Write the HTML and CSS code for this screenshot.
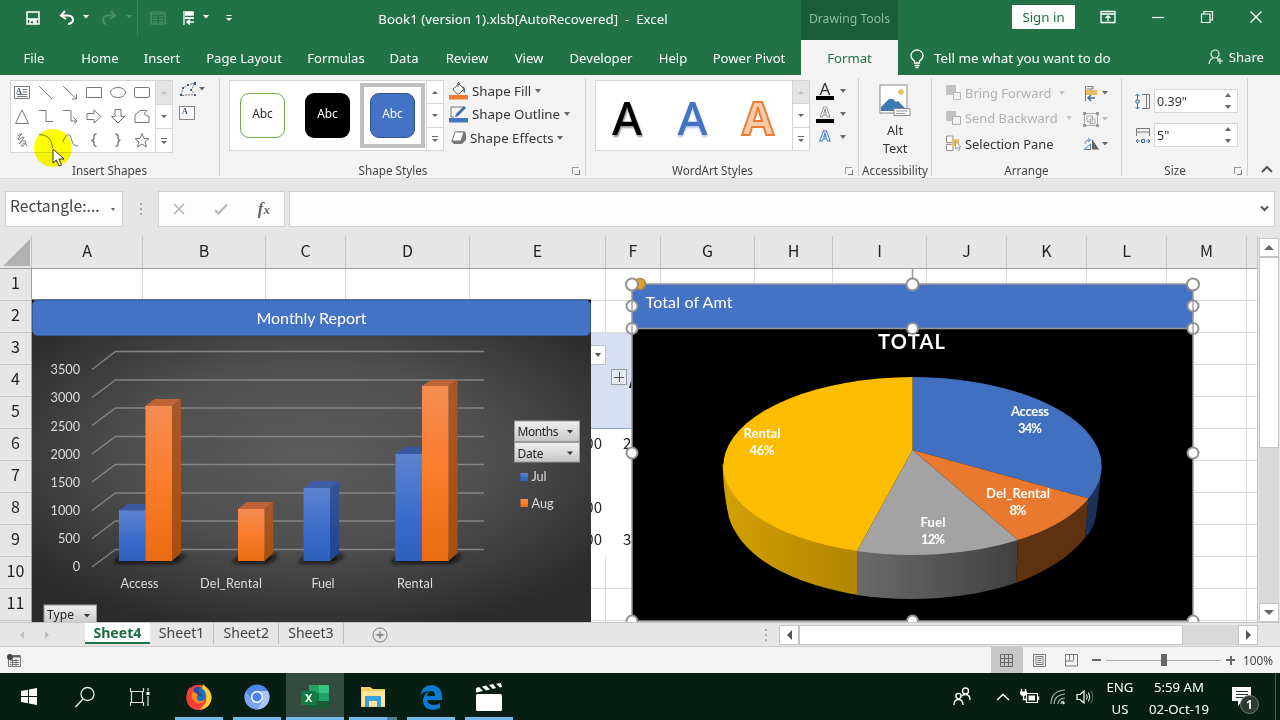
FILE: index.html
```html
<!DOCTYPE html>
<html lang="en">
    <head>
        <meta charset="utf-8">
        <title>Book1 (version 1).xlsb[AutoRecovered] - Excel</title>
        <link rel="stylesheet" href="styles.css">
    </head>
    <body>
        <div id="titlebar">
            <div class="quick">
                <svg class="q-save" width="14" height="14" viewBox="0 0 14 14"><path d="M1 1H13V13H1ZM1 8H13M4 13V9.5H10V13" fill="none" stroke="#fff" stroke-width="1.5"/><rect x="7" y="10" width="2" height="3" fill="#fff"/></svg>
                <svg class="q-undo" width="32" height="16" viewBox="0 0 32 16"><path d="M6 1L2 5.5L7 9M2.5 5.5H9Q14 6 14 10Q13.5 13.5 9 14" fill="none" stroke="#fff" stroke-width="2"/><path d="M24 5h6l-3 3.5z" fill="#fff"/></svg>
                <svg class="q-redo" width="32" height="16" viewBox="0 0 32 16"><path d="M10 1L14 5.5L9 9M13.5 5.5H7Q2 6 2 10Q2.5 13.5 5 14" fill="none" stroke="#4d8d68" stroke-width="2"/><path d="M25 5h6l-3 3.5z" fill="#4d8d68"/></svg>
                <i class="q-line"></i>
                <svg class="q-form" width="16" height="14" viewBox="0 0 16 14"><path d="M1 1H15V13H1ZM1 3H15M3 6H7M3 8.5H7M3 11H7M9 6H13M9 8.5H13M9 11H13" fill="none" stroke="#56936e" stroke-width="1.2"/></svg>
                <svg class="q-list" width="30" height="16" viewBox="0 0 30 16"><path d="M2 1V15M3 2H11V5H3M3 8H12" fill="none" stroke="#fff" stroke-width="1.3"/><path d="M3 2h9v3H3zM3 7h8v2H3z" fill="#fff"/><path d="M12 12H5M8 9.5L5 12L8 14.5" fill="none" stroke="#fff" stroke-width="1.6"/><path d="M21 5h6l-3 3.5z" fill="#fff"/></svg>
                <svg class="q-more" width="8" height="8" viewBox="0 0 8 8"><path d="M1.5 1.5h5" stroke="#fff"/><path d="M1 4h6l-3 3z" fill="#fff"/></svg>
            </div>
            <div class="title">Book1 (version 1).xlsb[AutoRecovered] &nbsp;-&nbsp; Excel</div>
            <div class="tools">Drawing Tools</div>
            <div class="window">
                <button class="signin">Sign in</button>
                <svg width="16" height="14" viewBox="0 0 16 14"><path d="M1 1.5H15V12.5H1ZM1 4H15M8 11V6M5.500 8L8 5.800L10.500 8" fill="none" stroke="#fff" stroke-width="1.300"/></svg>
                <svg width="14" height="14" viewBox="0 0 14 14"><path d="M1 7.500H13" stroke="#fff" stroke-width="1.200"/></svg>
                <svg width="14" height="14" viewBox="0 0 14 14"><path d="M1.500 4H10V12.500H1.500ZM4 4V1.500H12.500V10H10" fill="none" stroke="#fff" stroke-width="1.200"/></svg>
                <svg width="14" height="14" viewBox="0 0 14 14"><path d="M1.500 1.500L12.500 12.500M12.500 1.500L1.500 12.500" stroke="#fff" stroke-width="1.400"/></svg>
            </div>
        </div>

        <div id="tabs">
            <span>File</span><span>Home</span><span>Insert</span><span>Page Layout</span><span>Formulas</span><span>Data</span><span>Review</span><span>View</span><span>Developer</span><span>Help</span><span>Power Pivot</span>
            <span class="active">Format</span>
            <div class="tell">
                <svg width="16" height="20" viewBox="0 0 16 20"><path d="M5.500 14V12Q2 9.500 2 6.500A6 5.500 0 0 1 14 6.500Q14 9.500 10.500 12V14ZM5.500 16.500H10.500M6.500 18.500H9.500" fill="none" stroke="#fff" stroke-width="1.300"/></svg>
                Tell me what you want to do
            </div>
            <div class="share">
                <svg width="16" height="16" viewBox="0 0 16 16"><circle cx="7" cy="5" r="4" fill="none" stroke="#e4f0e8" stroke-width="1.200"/><path d="M1 15Q1.500 10.500 5 9M9 9L11 11M12 9V15M9 12H15" fill="none" stroke="#e4f0e8" stroke-width="1.200"/></svg>
                Share
            </div>
        </div>

        <div id="ribbon">
            <div class="group g-shapes">
                <div class="body">
                    <div class="gallery">
                        <div class="shapes">
                            <svg viewBox="0 0 24 24"><path d="M4.500 6.500H19.500V18.500H4.500ZM12.500 9.500H17.500M12.500 12H17.500M7 14.500H17.500M7 16.500H17.500"/><text x="6" y="14" class="tiny">A</text></svg>
                            <svg viewBox="0 0 24 24"><path d="M5 6L18 19"/></svg>
                            <svg viewBox="0 0 24 24"><path d="M5 6L18 18.500M18.500 14.500V19H14"/></svg>
                            <svg viewBox="0 0 24 24"><path d="M4.500 7.500H19.500V17.500H4.500Z"/></svg>
                            <svg viewBox="0 0 24 24"><ellipse cx="12" cy="12.500" rx="7.500" ry="5"/></svg>
                            <svg viewBox="0 0 24 24"><rect x="4.500" y="7.500" width="15" height="10" rx="1.500"/></svg>
                            <svg viewBox="0 0 24 24"><path d="M12 6L18.500 19.500H5.500Z"/></svg>
                            <svg viewBox="0 0 24 24"><path d="M5 6.500H12V17.500H19"/></svg>
                            <svg viewBox="0 0 24 24"><path d="M5 6.500H13V17H19M15.500 13.500L19 17L15.500 20"/></svg>
                            <svg viewBox="0 0 24 24"><path d="M5 9.500H12V6L19 12.500L12 19V15.500H5Z"/></svg>
                            <svg viewBox="0 0 24 24"><path d="M9 5.500H15V12.500H18.500L12 19L5.500 12.500H9Z"/></svg>
                            <svg viewBox="0 0 24 24"><path d="M5 18.500V11L10 6.500H17L14.500 9Q14.500 12 19 12V18.500Z"/></svg>
                            <svg viewBox="0 0 24 24"><path d="M7.500 8L12 5.500L8 11Q9 13 12 9.500Q15 8 13 11L9 16Q13 11.500 15.500 13Q17 16 12 18.500Q10 18 12.500 16Q16 14 17 18"/></svg>
                            <svg viewBox="0 0 24 24"><path d="M5 6.500Q18 6.500 18.500 20"/></svg>
                            <svg viewBox="0 0 24 24"><path d="M4.500 14Q9 4 12 7.500C14.500 11 13 18 20 18"/></svg>
                            <svg viewBox="0 0 24 24"><path d="M14.500 6Q12 6 12 8.500Q12.500 12 9.500 12.500Q12.500 13 12 16Q12 18.500 14.500 18.500" class="thick"/></svg>
                            <svg viewBox="0 0 24 24"><path d="M9.500 6Q12 6 12 8.500Q11.500 12 14.500 12.500Q11.500 13 12 16Q12 18.500 9.500 18.500" class="thick"/></svg>
                            <svg viewBox="0 0 24 24"><path d="M12 5.500L14 10.500H19L15 14L16.500 19L12 16L7.500 19L9 14L5 10.500H10Z"/></svg>
                        </div>
                        <div class="scroller"><b class="up off"></b><b class="down"></b><b class="more"></b></div>
                    </div>
                    <div class="edit">
                        <svg width="28" height="16" viewBox="0 0 28 16"><path d="M2 13L4 6L13 1.500H16L12 8L16 12.500L2 13.500" fill="none" stroke="#777" stroke-dasharray="2 1"/><path d="M3 5h2v2H3zM1 12h2v2H1zM15 0h2v3h-2zM11 7h2v2h-2zM15 12h2v2h-2zM8 2h2v2H8z" fill="#3b5c85"/><path d="M20 5h6l-3 3.500z" fill="#666"/></svg>
                        <svg width="16" height="14" viewBox="0 0 16 14"><rect x=".5" y=".5" width="15" height="13" fill="#fafafa" stroke="#888"/><text x="3" y="8" class="tiny">A</text></svg>
                    </div>
                </div>
                <div class="label">Insert Shapes</div>
            </div>

            <div class="group g-styles">
                <div class="body">
                    <div class="gallery">
                        <div class="presets">
                            <div class="preset"><span class="outlined">Abc</span></div>
                            <div class="preset"><span class="black">Abc</span></div>
                            <div class="preset selected"><span class="blue">Abc</span></div>
                        </div>
                        <div class="scroller"><b class="up"></b><b class="down"></b><b class="more"></b></div>
                    </div>
                    <div class="options">
                        <div><svg width="19" height="18" viewBox="0 0 19 18"><rect y="13" width="19" height="4.500" fill="#ed7d31"/><path d="M4 7L10 2L15 7L10 12Q8 13 4 7ZM9 5V1Q10 -1 11 2" fill="#fff" stroke="#555"/><path d="M13 4Q17 5 16 11Q14 10 14 7Z" fill="#3c6da8"/></svg><span>Shape Fill</span><i class="caret"></i></div>
                        <div><svg width="19" height="18" viewBox="0 0 19 18"><rect y="13" width="19" height="4.500" fill="#4472c4"/><path d="M15 2H2V12H5" fill="none" stroke="#777"/><path d="M6 12L7 9L15 1L17 3L9 11Z" fill="#3c6da8"/></svg><span>Shape Outline</span><i class="caret"></i></div>
                        <div class="effects"><svg width="17" height="16" viewBox="0 0 17 16"><path d="M5 4L8 1.500H15L16 4V10L12 14H4L1.500 12Z" fill="#777"/><path d="M5 2H14L11 11H2Z" fill="#fff" stroke="#777"/></svg><span>Shape Effects</span><i class="caret"></i></div>
                    </div>
                </div>
                <div class="label">Shape Styles<i class="launch"></i></div>
            </div>

            <div class="group g-art">
                <div class="body">
                    <div class="gallery">
                        <div class="arts"><span class="a1">A</span><span class="a2">A</span><span class="a3">A</span></div>
                        <div class="scroller"><b class="up off"></b><b class="down"></b><b class="more"></b></div>
                    </div>
                    <div class="letters">
                        <div><span class="fill">A</span><i class="caret"></i></div>
                        <div><span class="line">A</span><i class="caret"></i></div>
                        <div><span class="glow">A</span><i class="caret"></i></div>
                    </div>
                </div>
                <div class="label">WordArt Styles<i class="launch"></i></div>
            </div>

            <div class="group g-alt">
                <div class="body">
                    <svg width="32" height="33" viewBox="0 0 32 33"><rect x="1" y="1" width="27" height="28" fill="#fff" stroke="#888"/><circle cx="22" cy="8" r="2.800" fill="#e8bd62"/><path d="M2 27V23L10 15H14L17 18L19 17L26 24V27Z" fill="#3e78b5"/><path d="M15 24.500H31V31.500H15Z" fill="#fff" stroke="#888"/><path d="M17 27H29M17 29.500H26" stroke="#999"/></svg>
                    <span>Alt<br>Text</span>
                </div>
                <div class="label">Accessibility</div>
            </div>

            <div class="group g-arrange">
                <div class="body">
                    <div class="rows">
                        <div class="off"><svg width="15" height="15" viewBox="0 0 15 15"><path d="M0 0h10v10H0z" fill="#c2c2c2"/><path d="M7.500 7.500H14.500V14.500H7.500Z" fill="#f3f3f3" stroke="#bbb"/></svg><span>Bring Forward</span><i class="caret"></i></div>
                        <div class="off"><svg width="15" height="15" viewBox="0 0 15 15"><path d="M0 0h10v10H0z" fill="#c2c2c2"/><path d="M6.500 5.500H14.500V13.500H6.500Z" fill="#f3f3f3" stroke="#aaa"/></svg><span>Send Backward</span><i class="caret"></i></div>
                        <div><svg width="15" height="17" viewBox="0 0 16 17"><path d="M.5 .5H7.500V7.500H.5ZM.5 9.500H7.500V16H.5Z" fill="#fff" stroke="#888"/><path d="M6 4h8v7H6z" fill="#e8bd62"/><path d="M10 6V14.500L12 12.500L13.500 16L15 15L13.500 12H16Z" fill="#fff" stroke="#777" stroke-width=".7"/></svg><span>Selection Pane</span></div>
                    </div>
                    <div class="side">
                        <svg width="28" height="17" viewBox="0 0 28 17"><path d="M3.500 1V16M5 1.500H11V4H5" fill="none" stroke="#777"/><path d="M4 5h11v5H4z" fill="#e8bd62"/><path d="M13 13H6M9 10L6 13L9 16" fill="none" stroke="#3b6ea8" stroke-width="1.500"/><path d="M20 6h6l-3 3.500z" fill="#666"/></svg>
                        <svg width="28" height="17" viewBox="0 0 28 17"><path d="M2.500 2.500H15.500V14.500H2.500ZM5 5H10.500V10.500H5ZM8 8H13V12.500H8Z" fill="none" stroke="#aaa"/><path d="M1 1h3v3H1zM14 1h3v3h-3zM1 13h3v3H1zM14 13h3v3h-3z" fill="#999"/><path d="M20 6h6l-3 3.500z" fill="#bbb"/></svg>
                        <svg width="28" height="17" viewBox="0 0 28 17"><path d="M10 3V13.500H17Z" fill="#666"/><path d="M2 13.500H8.500V8ZM3 8Q3 4 8 4M6 2L8.500 4L6 6" fill="none" stroke="#5681ae"/><path d="M20 6h6l-3 3.500z" fill="#666"/></svg>
                    </div>
                </div>
                <div class="label">Arrange</div>
            </div>

            <div class="group g-size">
                <div class="body">
                    <div class="field"><svg width="16" height="17" viewBox="0 0 16 17"><path d="M7 1.500H14.500V15.500H7M11.500 1.500V15.500" fill="none" stroke="#777"/><path d="M2.500 1V6M2.500 11V16M.5 3L2.500 1L4.500 3M.5 14L2.500 16L4.500 14M1 7h3v3H1z" fill="none" stroke="#3b6ea8"/></svg><div class="spin">0.39"<span><i class="caret flip"></i><i class="caret"></i></span></div></div>
                    <div class="field"><svg width="16" height="17" viewBox="0 0 16 17"><path d="M1.500 9V1.500H14.500V9M1.500 5H14.500" fill="none" stroke="#777"/><path d="M1 14H5M11 14H15M3 12L1 14L3 16M13 12L15 14L13 16M6.500 12.500h3v3h-3z" fill="none" stroke="#3b6ea8"/></svg><div class="spin">5"<span><i class="caret flip"></i><i class="caret"></i></span></div></div>
                </div>
                <div class="label">Size<i class="launch"></i></div>
            </div>
            <div class="collapse"><svg width="12" height="8" viewBox="0 0 12 8"><path d="M1 7L6 2L11 7" fill="none" stroke="#555" stroke-width="2"/></svg></div>
        </div>

        <div id="formula">
            <div class="name">Rectangle:...<i class="caret small"></i></div>
            <div class="dots"><i></i><i></i><i></i></div>
            <div class="buttons">
                <svg width="12" height="12" viewBox="0 0 12 12"><path d="M1 1L11 11M11 1L1 11" stroke="#b5b5b5" stroke-width="1.600"/></svg>
                <svg width="14" height="12" viewBox="0 0 14 12"><path d="M1 7L4.500 10.500L13 1.500" fill="none" stroke="#b5b5b5" stroke-width="2"/></svg>
                <span class="fx">f<small>x</small></span>
            </div>
            <div class="input"><svg width="9" height="7" viewBox="0 0 9 7"><path d="M1 1.500L4.500 5L8 1.500" fill="none" stroke="#555" stroke-width="2"/></svg></div>
        </div>

        <div id="workbook">
            <div class="sheet">
                <div class="heads">
                    <div class="corner"><svg width="27" height="27" viewBox="0 0 27 27"><path d="M27 0V27H0Z" fill="#b2b2b2"/></svg></div>
                    <span class="c-a">A</span><span class="c-b">B</span><span class="c-c">C</span><span class="c-d">D</span><span class="c-e">E</span><span class="c-f">F</span><span class="c-g">G</span><span class="c-h">H</span><span class="c-i">I</span><span class="c-j">J</span><span class="c-j">K</span><span class="c-j">L</span><span class="c-j">M</span><span class="c-n"></span>
                </div>
                <div class="grid">
                    <div class="numbers"><span>1</span><span>2</span><span>3</span><span>4</span><span>5</span><span>6</span><span>7</span><span>8</span><span>9</span><span>10</span><span>11</span></div>
                    <div class="col c-a"></div>
                    <div class="col c-b"></div>
                    <div class="col c-c"></div>
                    <div class="col c-d"></div>
                    <div class="col c-e">
                        <p></p><p></p><p class="pivot"><i class="filter"></i></p><p class="pivot"></p><p class="pivot last"></p>
                        <p class="val">00</p><p class="val"></p><p class="val">00</p><p class="val">00</p>
                    </div>
                    <div class="col c-f">
                        <p></p><p></p><p class="pivot"></p><p class="pivot"><i class="plus"></i><b>A</b></p><p class="pivot last"></p>
                        <p class="val">2</p><p class="val"></p><p class="val"></p><p class="val">3</p>
                    </div>
                    <div class="col c-g"></div>
                    <div class="col c-h"></div>
                    <div class="col c-i"></div>
                    <div class="col c-j"></div>
                    <div class="col c-j"></div>
                    <div class="col c-j"></div>
                    <div class="col c-j"></div>
                    <div class="col c-n"></div>

                    <!-- monthly report, 3d columns -->
                    <svg class="report" width="559" height="323" viewBox="32 299 559 323">
                        <defs>
                            <radialGradient id="bg" cx=".5" cy=".42" r=".64"><stop offset="0" stop-color="#5c5c5c"/><stop offset=".5" stop-color="#4f4f4f"/><stop offset="1" stop-color="#2b2b2b"/></radialGradient>
                            <linearGradient id="blue" x2="0" y2="1"><stop offset="0" stop-color="#5e84d0"/><stop offset=".6" stop-color="#3a6bcb"/><stop offset="1" stop-color="#2e60bd"/></linearGradient>
                            <linearGradient id="orange" x2="0" y2="1"><stop offset="0" stop-color="#f58c52"/><stop offset=".5" stop-color="#fb7c2b"/><stop offset="1" stop-color="#e96c12"/></linearGradient>
                            <linearGradient id="blueside" x2="0" y2="1"><stop offset="0" stop-color="#34559b"/><stop offset="1" stop-color="#1f448c"/></linearGradient>
                            <linearGradient id="orangeside" x2="0" y2="1"><stop offset="0" stop-color="#a75728"/><stop offset="1" stop-color="#a94f0c"/></linearGradient>
                            <linearGradient id="btn" x2="0" y2="1"><stop offset="0" stop-color="#f0f0f0"/><stop offset="1" stop-color="#c6c6c6"/></linearGradient>
                            <filter id="soft" x="-20%" y="-60%" width="140%" height="220%"><feGaussianBlur stdDeviation="2"/></filter>
                        </defs>
                        <rect x="32" y="299.500" width="559" height="323" fill="#111"/>
                        <rect x="32" y="334" width="559" height="288" fill="url(#bg)"/>
                        <rect x="32.500" y="300" width="558" height="35.500" rx="5" fill="#4472c4" stroke="#355a9c"/>
                        <text x="311.500" y="323.500" class="head mid" textLength="110">Monthly Report</text>
                        <path class="wall" d="M92 369.500L115.500 351.500H484M92 397.500L115.500 380H484M92 425.500L115.500 408H484M92 454L115.500 436.500H484M92 482L115.500 464.500H484M92 510.500L115.500 493H484M92 538.500L115.500 521H484M92 567L115.500 549.500H484"/>
                        <g class="axis end">
                            <text x="80" y="374">3500</text><text x="80" y="402">3000</text><text x="80" y="430.500">2500</text><text x="80" y="458.500">2000</text><text x="80" y="487">1500</text><text x="80" y="515">1000</text><text x="80" y="543">500</text><text x="80" y="571">0</text>
                        </g>
                        <path d="M113 563L122 555H186L176 563ZM232 563L241 555H279L268 563ZM298 563L307 555H345L334 563ZM390 563L399 555H463L452 563Z" fill="#111" filter="url(#soft)"/>
                        <path d="M119 510.500L128 504H154V561H119Z" fill="#3a58a0"/><path d="M119 510.500H145.500V561H119Z" fill="url(#blue)"/>
                        <path d="M145.500 406L154.500 399H181L172 406Z" fill="#bf6334"/><path d="M172 406L181 399V553L172 561Z" fill="url(#orangeside)"/><path d="M145.500 406H172V561H145.500Z" fill="url(#orange)"/>
                        <path d="M238 509L247 502H273L264.500 509Z" fill="#bf6334"/><path d="M264.500 509L273 502V553L264.500 561Z" fill="url(#orangeside)"/><path d="M238 509H264.500V561H238Z" fill="url(#orange)"/>
                        <path d="M303.500 488L312.500 481H339L330 488Z" fill="#3e5da6"/><path d="M330 488L339 481V553L330 561Z" fill="url(#blueside)"/><path d="M303.500 488H330V561H303.500Z" fill="url(#blue)"/>
                        <path d="M395.500 454L404.500 447H431V561H395.500Z" fill="#3a58a0"/><path d="M395.500 454H422V561H395.500Z" fill="url(#blue)"/>
                        <path d="M422 386L431 380H457.500L448.500 386Z" fill="#bf6334"/><path d="M448.500 386L457.500 380V553L448.500 561Z" fill="url(#orangeside)"/><path d="M422 386H448.500V561H422Z" fill="url(#orange)"/>
                        <g class="axis mid">
                            <text x="139.500" y="588" textLength="38">Access</text><text x="231" y="588" textLength="62">Del_Rental</text><text x="323" y="588" textLength="23">Fuel</text><text x="415" y="588" textLength="36">Rental</text>
                        </g>
                        <g class="field-btn">
                            <rect x="514.500" y="421" width="65" height="20.500"/><text x="517.500" y="436" textLength="41">Months</text><path d="M567 430h6l-3 3.500z"/>
                            <rect x="514.500" y="442.500" width="65" height="19.500"/><text x="517.500" y="457.500" textLength="26">Date</text><path d="M567 451.500h6l-3 3.500z"/>
                            <rect x="44" y="605" width="52.500" height="20"/><text x="47" y="619" textLength="27">Type</text><path d="M84 614h6l-3 3.500z"/>
                        </g>
                        <rect x="520.500" y="473" width="7.500" height="8" fill="url(#blue)"/><text x="531.500" y="481" class="axis" textLength="15">Jul</text>
                        <rect x="520.500" y="499" width="7.500" height="8" fill="url(#orange)"/><text x="531.500" y="507.500" class="axis" textLength="22">Aug</text>
                    </svg>

                    <!-- total of amt, 3d pie with the selected banner -->
                    <svg class="pie" width="582" height="353" viewBox="622 269 582 353">
                        <defs>
                            <linearGradient id="gold"><stop offset="0" stop-color="#d3a003"/><stop offset="1" stop-color="#b28400"/></linearGradient>
                            <linearGradient id="grey"><stop offset="0" stop-color="#6b6b6b"/><stop offset="1" stop-color="#404040"/></linearGradient>
                        </defs>
                        <rect x="632" y="328" width="561" height="293" fill="#000"/>
                        <path d="M722.500 464Q724 500 730 521Q752 576 857.500 595V551Z" fill="url(#gold)"/>
                        <path d="M857 551V595A183 88.500 0 0 0 1016 583L1018 540Z" fill="url(#grey)"/>
                        <path d="M1018 540L1016 583Q1062 566 1085 538L1088.500 498Z" fill="#5e3110"/>
                        <path d="M1088.500 498L1085 538Q1096 526 1097 510L1102 466Z" fill="#1b2f58"/>
                        <path d="M912.500 450V377A190 89 0 0 1 1088.500 498.500Z" fill="#4170c1"/>
                        <path d="M912.500 450L1088.500 498.500A190 89 0 0 1 1018 540Z" fill="#e8792f"/>
                        <path d="M912.500 450L1018 540A190 89 0 0 1 857 551Z" fill="#a3a3a3"/>
                        <path d="M912.500 450L857 551A190 89 0 0 1 912.500 377Z" fill="#fcbd00"/>
                        <text x="911.500" y="348.500" class="total" textLength="67">TOTAL</text>
                        <g class="slice">
                            <text x="1030" y="416" textLength="38">Access</text><text x="1030" y="433" textLength="24">34%</text>
                            <text x="1018" y="497.500" textLength="64">Del_Rental</text><text x="1018" y="514.500" textLength="17">8%</text>
                            <text x="933" y="527" textLength="25">Fuel</text><text x="933" y="544" textLength="24">12%</text>
                            <text x="762" y="438" textLength="37">Rental</text><text x="762" y="455" textLength="25">46%</text>
                        </g>
                        <rect x="632" y="284" width="561" height="44" fill="#4472c4"/>
                        <text x="645.500" y="308" class="head" textLength="87">Total of Amt</text>
                        <path d="M632 284V621H1193V284ZM632 328.500H1193M912.500 269V284" fill="none" stroke="#999" stroke-width="1.500"/>
                        <circle cx="640" cy="284" r="5.500" fill="#e2a030" stroke="#a58a55" stroke-width="1.500"/>
                        <g class="handles">
                            <circle cx="632" cy="284.500" r="6"/><circle cx="912.500" cy="284.500" r="6"/><circle cx="1193" cy="284.500" r="6"/>
                            <circle cx="632" cy="306" r="5.500"/><circle cx="1193" cy="306" r="5.500"/><path d="M632 301V311M1193 301V311"/>
                            <circle cx="632" cy="328.500" r="5.500"/><circle cx="912.500" cy="328.500" r="5.500"/><circle cx="1193" cy="328.500" r="5.500"/><path d="M632 324V333M1193 324V333"/>
                            <circle cx="632" cy="453" r="5.500"/><circle cx="1193" cy="453" r="5.500"/>
                            <circle cx="632" cy="621" r="5.500"/><circle cx="912.500" cy="621" r="5.500"/><circle cx="1193" cy="621" r="5.500"/>
                        </g>
                    </svg>
                </div>
            </div>
            <div class="vscroll"><b class="up"></b><div class="thumb"></div><b class="down end"></b></div>
        </div>

        <div id="sheets">
            <div class="nav"><i class="left"></i><i class="right"></i></div>
            <span class="active">Sheet4</span><span>Sheet1</span><span>Sheet2</span><span>Sheet3</span>
            <svg class="add" width="16" height="16" viewBox="0 0 16 16"><circle cx="8" cy="8" r="7" fill="none" stroke="#777"/><path d="M8 4.500V11.500M4.500 8H11.500" stroke="#777" stroke-width="1.300"/></svg>
            <div class="dots"><i></i><i></i><i></i></div>
            <div class="hscroll"><b class="left"></b><div class="thumb"></div><b class="right"></b></div>
        </div>

        <div id="status">
            <svg class="macro" width="14" height="13" viewBox="0 0 14 13"><path d="M1.500 4V12.500H13.500V2.500H5M3 6.500H12M3 8.500H12M3 10.500H12M5.500 5V12M9 5V12" fill="none" stroke="#777"/><path d="M6 1h7.500v2.500H6z" fill="#666"/><circle cx="3" cy="3" r="3" fill="#444"/></svg>
            <div class="view on"><svg width="13" height="13" viewBox="0 0 13 13"><path d="M.5 .5H12.500V12.500H.5ZM.5 4.500H12.500M.5 8.500H12.500M4.500 .5V12.500M8.500 .5V12.500" fill="none" stroke="#666"/></svg></div>
            <div class="view"><svg width="13" height="13" viewBox="0 0 13 13"><path d="M.5 .5H12.500V12.500H.5ZM3 2.500H10V10.500H3ZM4.500 4.500H8.500M4.500 6.500H8.500M4.500 8.500H8.500" fill="none" stroke="#777"/></svg></div>
            <div class="view"><svg width="13" height="13" viewBox="0 0 13 13"><path d="M.5 .5H12.500V12H.5ZM4.500 .5V6.500M8.500 .5V6.500M.5 7H8.500" fill="none" stroke="#777"/></svg></div>
            <div class="zoom"><i class="minus"></i><div class="track"><b></b></div><i class="minus plus"></i></div>
            <span>100%</span>
        </div>

        <div id="taskbar">
            <div class="app"><svg width="16" height="17" viewBox="0 0 16 17"><path d="M0 3L7 1.800V8H0ZM8 1.600L16 0V8H8ZM0 9H7V15.200L0 14ZM8 9H16V17L8 15.500Z" fill="#fff"/></svg></div>
            <div class="app"><svg width="22" height="22" viewBox="0 0 22 22"><circle cx="13.500" cy="8" r="6.500" fill="none" stroke="#eee" stroke-width="1.300"/><path d="M9 13L1.500 21" stroke="#eee" stroke-width="1.500"/></svg></div>
            <div class="app"><svg width="20" height="20" viewBox="0 0 20 20"><path d="M.5 1V4.500H13.500V1M1.500 4.500V15.500H12.500V4.500M.5 19V15.500H13.500V19M18 1V4M18 9V19" fill="none" stroke="#ddd" stroke-width="1.200"/><path d="M16.500 5h3v3h-3z" fill="#fff"/></svg></div>
            <div class="app open"><svg width="28" height="28" viewBox="0 0 28 28"><circle cx="14" cy="14.500" r="12.500" fill="#ff5a1f"/><path d="M2 10Q4 3 7 5Q10 0 14 3L20 7Q26 10 26 18Q22 27 13 27Q3 26 1.500 17Z" fill="#fa3b38"/><path d="M18 1Q21 4 24 7Q29 15 24 22Q20 27 14 26Q23 21 21 12Q16 9 18 1Z" fill="#ffcf2f"/><circle cx="14" cy="12" r="7" fill="#1677c8"/><path d="M7 9Q12 8 14 12Q11 13 12 16Q14 20 20 17Q17 22 11 20Q6 17 7 9Z" fill="#ff8b1a"/><path d="M9 5Q13 2 17 5Q13 5 14 8Q17 10 18 13Q13 15 12 11L9 9Z" fill="#2e4c91"/></svg></div>
            <div class="app open"><svg width="28" height="28" viewBox="0 0 28 28"><circle cx="14" cy="14" r="12.500" fill="#4f84e8"/><path d="M14 8H25A12.500 12.500 0 0 1 14 26.500L19.500 17Z" fill="#a9c6f8"/><path d="M3 8A12.500 12.500 0 0 0 14 26.500L19 18L9 17Z" fill="#7ba5f2"/><circle cx="14" cy="14" r="6" fill="#fff"/><circle cx="14" cy="14" r="4.600" fill="#4c83e9"/></svg></div>
            <div class="app open current"><svg width="29" height="26" viewBox="0 0 29 26"><path d="M8 1H28V24H8Z" fill="#117a43"/><path d="M8 1H18V9H8Z" fill="#22a366"/><path d="M18 1H28V9H18Z" fill="#35c481"/><path d="M18 9H28V17H18Z" fill="#21a366"/><path d="M8 17H28V24H8Z" fill="#185c37"/><rect y="7" width="15" height="14" rx="1" fill="#107c41"/><text x="4" y="18" class="x">X</text></svg></div>
            <div class="app open stack"><svg width="26" height="22" viewBox="0 0 26 22"><path d="M1 1H10L13 3H25V21H1Z" fill="#f5cf68"/><path d="M2 5H25V20H2Z" fill="#ffe597"/><path d="M5 11Q5 10 6 10H20Q21 10 21 11V21H17V15H9V21H5Z" fill="#36a2d9"/></svg></div>
            <div class="app open edge"><svg width="24" height="26" viewBox="0 0 24 26"><path d="M1 12Q3 1 13 1Q23 2 23 14V16H8Q9 21 15 21Q19 21 21 19V24Q17 26 13 26Q4 25 4 16Q5 9 11 7Q4 7 1 12ZM8 12H16Q16 7 12.500 7Q9 7 8 12Z" fill="#0b7bd5"/></svg></div>
            <div class="app open"><svg width="27" height="28" viewBox="0 0 27 28"><rect y="11" width="26" height="17" rx="1.500" fill="#fff"/><path d="M0 5L3 4L7 8L0 9.500ZM6 3.500L10 2.500L14 6.500L10 7.500ZM13 2L17 1L20 5L17 6ZM20 .8L25 0L26 4L24 4.500Z" fill="#fff"/></svg></div>

            <div class="tray">
                <svg class="people" width="18" height="19" viewBox="0 0 18 19"><circle cx="12.500" cy="4" r="3" fill="none" stroke="#fff" stroke-width="1.400"/><circle cx="5.500" cy="9" r="2.600" fill="none" stroke="#fff" stroke-width="1.400"/><path d="M1 18Q1 12.500 5.500 12.500Q10 12.500 10 18M9 9Q10 7.500 12.500 7.500Q17 7.500 17 13" fill="none" stroke="#fff" stroke-width="1.400"/></svg>
                <svg width="14" height="8" viewBox="0 0 14 8"><path d="M1 7L7 1.500L13 7" fill="none" stroke="#fff" stroke-width="1.300"/></svg>
                <svg width="20" height="15" viewBox="0 0 20 15"><path d="M6.500 4.500H17.500V13.500H6.500Z" fill="none" stroke="#fff" stroke-width="1.200"/><path d="M8.500 6.500h6.500v5H8.500z" fill="#fff"/><path d="M18.500 7.500V11" stroke="#fff" stroke-width="1.500"/><path d="M1.500 0V3M5.500 0V3M3.500 6V10.500H6" fill="none" stroke="#fff" stroke-width="1.400"/><path d="M0 2.500H7V5Q6 7 3.500 7Q1 7 0 5Z" fill="#fff"/></svg>
                <svg width="16" height="16" viewBox="0 0 16 16"><path d="M1 15Q1 2 15 1M4 15Q4.500 6 15 5M8 15Q8 9.500 15 9M11 15Q11 12.500 14 12" fill="none" stroke="#aab5ae" stroke-width="1.200"/><circle cx="13.500" cy="14" r="1.200" fill="#fff"/></svg>
                <svg width="18" height="16" viewBox="0 0 18 16"><path d="M1 5.500H4L8 2V14L4 10.500H1Z" fill="none" stroke="#fff" stroke-width="1.200"/><path d="M10.500 5.500Q12 8 10.500 10.500M12.500 3.500Q15 8 12.500 12.500" fill="none" stroke="#fff"/><path d="M15 1.500Q18.500 8 15 14.500" fill="none" stroke="#5d7165"/></svg>
                <div class="lang">ENG<br>US</div>
                <div class="clock">5:59 AM<br>02-Oct-19</div>
                <div class="notes"><svg width="20" height="20" viewBox="0 0 20 20"><path d="M0 0H19V14H10L6 19V14H0Z" fill="#fff"/><path d="M4 4.500H16M4 7.500H16M4 10.500H11" stroke="#1c3526" stroke-width="1.200"/></svg><b>1</b></div>
            </div>
        </div>

        <div id="pointer"></div>
        <svg id="arrow" width="14" height="20" viewBox="0 0 14 20"><path d="M1 1V15L4.300 12L7 18L9.500 17L7 11H12Z" fill="#fff" stroke="#333"/></svg>
    </body>
</html>
```
FILE: styles.css
```css
* {
    box-sizing: border-box;
}

body {
    margin: 0;
    width: 1280px;
    height: 720px;
    overflow: hidden;
    display: flex;
    flex-direction: column;
    position: relative;
    background-color: #e6e6e6;
    color: #333;
    font-family: "Noto Sans", "Open Sans", sans-serif;
    font-size: 12.8px;
    white-space: nowrap;
}

svg {
    display: block;
    flex: none;
}

i {
    font-style: normal;
}

#titlebar {
    display: flex;
    height: 40px;
    background-color: #217346;
    color: #fff;
    flex: none;
}

.quick {
    display: flex;
    align-items: center;
    width: 245px;
    height: 36px;
    padding-left: 26px;
}

.q-undo {
    margin-left: 19px;
}

.q-redo {
    margin-left: 10px;
}

.q-line {
    width: 1px;
    height: 36px;
    margin-left: 4px;
    background-color: #3f8660;
}

.q-form {
    margin-left: 12px;
}

.q-list {
    margin-left: 16px;
}

.q-more {
    margin-left: 13px;
}

.title {
    width: 556px;
    line-height: 38px;
    text-align: center;
    font-size: 13.3px;
}

.tools {
    width: 97px;
    line-height: 38px;
    text-align: center;
    font-size: 12.2px;
    background-color: #1a5c38;
    color: #8fbfa2;
}

.window {
    display: flex;
    align-items: center;
    height: 34px;
    flex: 1;
    padding-left: 114px;
    gap: 35px;
}

.signin {
    width: 63px;
    height: 24px;
    margin-right: -10px;
    padding: 0;
    border: none;
    border-radius: 1px;
    background-color: #fff;
    color: #217346;
    font-family: inherit;
    font-size: 13.3px;
}

#tabs {
    display: grid;
    grid-template-columns: 68px 64px 60px 104px 80px 56px 70px 54px 90px 54px 101px 97px 1fr auto;
    height: 35px;
    line-height: 37px;
    flex: none;
    background-color: #217346;
    color: #fff;
    font-size: 13.1px;
    text-align: center;
}

#tabs span:nth-child(11) {
    padding-right: 3px;
}

#tabs .active {
    background-color: #f3f3f3;
    color: #217346;
}

.tell {
    display: flex;
    align-items: center;
    gap: 9px;
    padding-left: 11px;
    font-size: 13.4px;
}

.share {
    display: flex;
    align-items: center;
    gap: 5px;
    height: 34px;
    padding-right: 16px;
}

#ribbon {
    display: flex;
    height: 104px;
    flex: none;
    background-color: #f3f3f3;
    border-bottom: 1px solid #dcdcdc;
}

.group {
    display: flex;
    flex-direction: column;
    margin: 3px 0 2px;
    border-right: 1px solid #d0d0d0;
}

.g-shapes {
    width: 220px;
}

.g-styles {
    width: 366px;
}

.g-art {
    width: 273px;
}

.g-alt {
    width: 73px;
}

.g-arrange {
    width: 190px;
}

.g-size {
    width: 126px;
}

.body {
    display: flex;
    flex: none;
    height: 81px;
    padding: 2px 0 0 10px;
}

.g-styles .body,
.g-art .body {
    padding-left: 9px;
}

.label {
    position: relative;
    height: 18px;
    text-align: center;
    line-height: 22px;
    font-size: 11.7px;
    color: #444;
}

.g-styles .label,
.g-art .label,
.g-size .label {
    padding-right: 19px;
}

.launch {
    position: absolute;
    right: 6px;
    top: 8px;
    width: 7px;
    height: 7px;
    border: solid #999;
    border-width: 1px 0 0 1px;
}

.launch::after {
    content: "";
    display: block;
    width: 4px;
    height: 4px;
    margin: 2px;
    border: solid #777;
    border-width: 0 1px 1px 0;
}

.gallery {
    display: flex;
    height: 71px;
    background-color: #fff;
    border: 1px solid #d5d5d5;
}

.g-shapes .gallery {
    height: 73px;
}

.shapes {
    display: grid;
    grid-template-columns: repeat(6, 24px);
    grid-auto-rows: 24px;
    margin: -1px 0 0 -1px;
    padding-right: 1px;
}

.shapes svg {
    fill: none;
    stroke: #777;
    stroke-width: 1;
}

.shapes .thick {
    stroke-width: 1.3;
}

.tiny {
    fill: #34557f;
    stroke: none;
    font: bold 8px "Liberation Serif", serif;
}

.scroller {
    display: flex;
    flex-direction: column;
    width: 17px;
    border-left: 1px solid #d5d5d5;
}

.scroller b {
    display: flex;
    flex: 1;
    align-items: center;
    justify-content: center;
    flex-direction: column;
    gap: 2px;
}

.scroller b + b {
    border-top: 1px solid #d5d5d5;
}

.scroller .off {
    background-color: #e3e3e3;
}

.up::after,
.down::after,
.more::after {
    content: "";
    border: 3px solid transparent;
    border-top: 3.5px solid #666;
    border-bottom: none;
}

.up::after {
    transform: scaleY(-1);
}

.off::after {
    border-top-color: #bbb;
}

.more::before {
    content: "";
    width: 6px;
    height: 1px;
    background-color: #666;
}

.caret {
    display: inline-block;
    border: 3px solid transparent;
    border-top: 4px solid #666;
    border-bottom: none;
}

.flip {
    transform: scaleY(-1);
}

.edit {
    display: flex;
    flex-direction: column;
    gap: 8px;
    padding: 2px 0 0 6px;
}

.presets {
    display: flex;
    width: 196px;
}

.preset {
    display: flex;
    width: 65px;
    height: 65px;
    margin-top: 2px;
    align-items: center;
    justify-content: center;
}

.preset span {
    width: 45px;
    height: 45px;
    border-radius: 9px;
    line-height: 41px;
    text-align: center;
    font-size: 11.9px;
    color: #fff;
}

.preset .outlined {
    border: 1.5px solid #70ad47;
    color: #222;
    line-height: 38px;
}

.preset .black {
    background-color: #000;
}

.preset .blue {
    flex: none;
    background-color: #4472c4;
    border: 1px solid #2f528f;
    line-height: 39px;
}

.selected {
    border: 4px solid #bfbfbf;
}

.options {
    margin-top: -1px;
    padding-left: 5px;
    font-size: 13.3px;
}

.options div {
    display: flex;
    align-items: center;
    height: 23.5px;
    gap: 4px;
}

.options .effects {
    padding-left: 1px;
    gap: 3px;
}

.arts {
    display: flex;
    width: 196px;
    height: 69px;
    line-height: 72px;
    font-size: 46px;
    font-weight: 500;
}

.arts span {
    width: 65.5px;
    padding-right: 3px;
    text-align: center;
}

.a1 {
    color: #000;
    text-shadow: 1px 2px 2px #999;
}

.a2 {
    color: #4472c4;
    text-shadow: 0 2px 2px #b8c8e8;
}

.a3 {
    color: #f8cbad;
    font-weight: bold;
    -webkit-text-stroke: 2px #ed7d31;
}

.letters {
    margin-top: -1px;
    padding-left: 6px;
}

.letters div {
    display: flex;
    align-items: center;
    height: 23px;
    gap: 6px;
}

.letters span {
    width: 18px;
    height: 18px;
    line-height: 14px;
    font-size: 17px;
    text-align: center;
}

.letters .fill {
    border-bottom: 4px solid #000;
}

.letters .line {
    border-bottom: 4px solid #000;
    color: #fff;
    font-size: 14px;
    font-weight: bold;
    -webkit-text-stroke: 0.7px #666;
}

.letters .glow {
    color: #fff;
    font-size: 15px;
    font-weight: bold;
    -webkit-text-stroke: 1px #4a82c5;
    text-shadow: 0 0 2px #8db4e2;
}

.g-alt .body {
    flex-direction: column;
    align-items: center;
    padding: 6px 0 0;
    gap: 4px;
    line-height: 18px;
    text-align: center;
}

.g-arrange .body {
    padding: 2px 0 0 14px;
}

.rows {
    width: 136px;
    font-size: 12.9px;
}

.rows div {
    display: flex;
    align-items: center;
    height: 25.5px;
    gap: 4px;
}

.rows .caret {
    margin-left: 4px;
}

.rows .off {
    color: #b1b1b1;
}

.off .caret {
    border-top-color: #c4c4c4;
}

.side {
    display: flex;
    flex-direction: column;
    gap: 8.5px;
    padding-top: 5px;
}

.g-size .body {
    flex-direction: column;
    gap: 10px;
    padding: 11px 0 0 13px;
}

.field {
    display: flex;
    align-items: center;
    gap: 3px;
}

.spin {
    display: flex;
    justify-content: space-between;
    width: 84px;
    height: 24px;
    padding: 0 6px 0 2px;
    line-height: 23px;
    background-color: #fff;
    border: 1px solid #d5d5d5;
    font-size: 12.5px;
}

.spin span {
    display: flex;
    flex-direction: column;
    justify-content: center;
    gap: 8px;
}

.collapse {
    align-self: flex-end;
    padding: 0 0 5px 13px;
}

#formula {
    display: flex;
    align-items: center;
    height: 57px;
    flex: none;
    padding: 2px 5px 0;
    font-family: "Noto Sans CJK SC", "Noto Sans", sans-serif;
}

#formula > div {
    height: 36px;
    background-color: #fdfdfd;
    border: 1px solid #d0d0d0;
}

#formula .name {
    display: flex;
    justify-content: space-between;
    align-items: center;
    width: 118px;
    padding: 0 7px 6px 4px;
    font-size: 15.7px;
    color: #444;
}

.name .small {
    margin-top: 8px;
    border-width: 3px 2.5px 0;
}

#formula .dots,
#sheets .dots {
    display: flex;
    flex-direction: column;
    justify-content: center;
    align-items: center;
    gap: 3px;
    width: 35px;
    background: none;
    border: none;
}

.dots i {
    width: 2px;
    height: 2px;
    background-color: #aaa;
}

#formula .buttons {
    display: flex;
    align-items: center;
    justify-content: space-between;
    width: 127px;
    padding: 0 14px;
    margin-right: 4px;
}

.fx {
    font: italic bold 17px "Liberation Serif", serif;
    color: #666;
}

.fx small {
    font-size: 13px;
}

#formula .input {
    display: flex;
    align-items: center;
    justify-content: flex-end;
    flex: 1;
    padding-right: 5px;
}

#workbook {
    display: flex;
    height: 386px;
    flex: none;
    font-family: "Noto Sans CJK SC", "Noto Sans", sans-serif;
    font-size: 16px;
    color: #222;
}

.sheet {
    width: 1258px;
    border-right: 1px solid #c6c6c6;
}

.heads {
    display: flex;
    height: 33px;
    border-bottom: 1px solid #9f9f9f;
    line-height: 28px;
    text-align: center;
}

.heads span {
    border-right: 1px solid #c4c4c4;
}

.corner {
    width: 32px;
    padding: 3px 0 0 3px;
    border-right: 1px solid #c4c4c4;
}

.c-a {
    width: 111px;
}

.c-b {
    width: 123px;
}

.c-c {
    width: 80px;
}

.c-d {
    width: 124px;
}

.c-e {
    width: 136px;
}

.c-f {
    width: 55px;
}

.c-g {
    width: 94px;
}

.c-h {
    width: 78px;
}

.c-i {
    width: 94px;
}

.c-j {
    width: 80px;
}

.heads .c-n,
.grid .c-n {
    width: 10px;
    border-right: none;
}

.grid {
    position: relative;
    display: flex;
    height: 353px;
    overflow: hidden;
}

.numbers {
    width: 32px;
    border-right: 1px solid #9f9f9f;
    text-align: center;
}

.numbers span {
    display: block;
    height: 32px;
    line-height: 27px;
    border-bottom: 1px solid #c4c4c4;
}

.col {
    border-right: 1px solid #d9d9d9;
    background: repeating-linear-gradient(#fff 0 31px, #d9d9d9 31px 32px);
}

.col p {
    display: flex;
    align-items: center;
    height: 32px;
    margin: 0;
}

.col .pivot {
    margin-right: -1px;
    background-color: #d9dff2;
}

.col .last {
    border-bottom: 1px solid #8ea9db;
}

.col .val {
    margin-right: -1px;
    padding: 0 4px 5px 0;
    background-color: #fff;
    font-size: 15px;
}

.c-e p {
    justify-content: flex-end;
}

.c-f .val {
    padding-left: 17px;
}

.filter {
    display: flex;
    align-items: center;
    justify-content: center;
    width: 16px;
    height: 20px;
    margin-top: 12px;
    background-color: #fff;
    border: 1px solid #b8bfd0;
}

.filter::after {
    content: "";
    border: 3.5px solid transparent;
    border-top: 4px solid #555;
    border-bottom: none;
}

.pivot .plus {
    flex: none;
    width: 16px;
    height: 16px;
    margin: -8px 2px 0 5px;
    border: 1px solid #999;
    background: linear-gradient(#555, #555) center / 10px 1px no-repeat, linear-gradient(#555, #555) center / 1px 10px no-repeat, #e6e9f2;
}

/* charts float over the cells */
.report {
    position: absolute;
    left: 32px;
    top: 30px;
}

.pie {
    position: absolute;
    left: 622px;
    top: 0;
}

.report text,
.pie text {
    font-family: Lato, "Noto Sans", sans-serif;
}

.report .head,
.pie .head {
    font-size: 16px;
    fill: #fff;
}

.report .mid,
.mid text {
    text-anchor: middle;
}

.end text {
    text-anchor: end;
}

.axis {
    font-size: 12.7px;
    fill: #dcdcdc;
}

.wall {
    fill: none;
    stroke: #858585;
    stroke-width: 1.3;
}

.field-btn rect {
    fill: url(#btn);
    stroke: #999;
}

.report .field-btn text {
    font-family: "Noto Sans", sans-serif;
    font-size: 12px;
    fill: #222;
}

.field-btn path {
    fill: #333;
}

.total {
    font-size: 20px;
    font-weight: bold;
    fill: #fff;
    text-anchor: middle;
}

.slice text {
    font-size: 13px;
    font-weight: bold;
    fill: #fff;
    text-anchor: middle;
}

.handles {
    fill: #fff;
    stroke: #919191;
    stroke-width: 2;
}

.handles path {
    stroke-width: 1.2;
}

.vscroll {
    display: flex;
    flex-direction: column;
    width: 20px;
    height: 384px;
    margin: 2px 0 0 1px;
    background-color: #d9d9d9;
}

.vscroll b {
    display: flex;
    align-items: center;
    justify-content: center;
    height: 19px;
    background-color: #fff;
    border: 1px solid #c4c4c4;
}

.vscroll b::after {
    border-width: 5px 5px 0;
}

.vscroll .thumb {
    height: 191px;
    background-color: #fff;
    border: 1px solid #c4c4c4;
}

.vscroll .end {
    margin-top: auto;
}

#sheets {
    display: flex;
    align-items: flex-start;
    height: 25px;
    flex: none;
    background-color: #e6e6e6;
    border-top: 1px solid #c6c6c6;
    border-bottom: 1px solid #cfcfcf;
    color: #444;
}

.nav {
    display: flex;
    width: 85px;
    gap: 21px;
    padding: 8px 0 0 20px;
}

.left::after,
.right::after {
    content: "";
    display: block;
    border: 4px solid transparent;
    border-right: 4px solid #bcbcbc;
    border-left: none;
}

.right::after {
    transform: scaleX(-1);
}

#sheets span {
    width: 64.7px;
    height: 21px;
    line-height: 20px;
    border-right: 1px solid #bdbdbd;
    text-align: center;
    font-size: 14.1px;
}

#sheets .active {
    background-color: #fff;
    border-right: none;
    border-bottom: 2px solid #217346;
    color: #1c6b40;
    font-weight: bold;
    font-size: 14.1px;
}

.add {
    margin: 4px 0 0 28px;
}

#sheets .dots {
    width: 4px;
    height: 24px;
    margin: 0 11px 0 auto;
}

.hscroll {
    display: flex;
    width: 479px;
    height: 20px;
    margin: 2px 22px 0 0;
    background-color: #d9d9d9;
}

.hscroll b {
    display: flex;
    align-items: center;
    justify-content: center;
    width: 20px;
    background-color: #fff;
    border: 1px solid #c4c4c4;
}

.hscroll b::after {
    border-width: 5px 5px 5px 0;
    border-right-color: #555;
}

.hscroll .thumb {
    width: 384px;
    background-color: #fff;
    border: 1px solid #c4c4c4;
}

.hscroll .right {
    margin-left: auto;
}

#status {
    display: flex;
    align-items: center;
    height: 26px;
    flex: none;
    padding-left: 7px;
    background-color: #f3f3f3;
    font-size: 11.8px;
}

.macro {
    margin-right: auto;
}

.view {
    display: flex;
    align-items: center;
    justify-content: center;
    width: 32.5px;
    height: 26px;
}

.view.on {
    background-color: #c8c8c8;
}

.zoom {
    display: flex;
    align-items: center;
    gap: 5px;
    margin: 0 8px 0 4px;
}

.minus {
    width: 9px;
    height: 2px;
    background-color: #666;
}

.minus.plus {
    height: 9px;
    background: linear-gradient(#666, #666) center / 9px 2px no-repeat, linear-gradient(#666, #666) center / 2px 9px no-repeat;
}

.track {
    display: flex;
    align-items: center;
    justify-content: center;
    width: 115px;
    height: 1px;
    background-color: #aaa;
}

.track b {
    width: 6px;
    height: 12px;
    background-color: #666;
}

#status > span {
    width: 37px;
    color: #444;
}

#taskbar {
    display: flex;
    height: 47px;
    flex: none;
    background-color: #071e12;
    color: #fff;
}

.app {
    display: flex;
    align-items: center;
    justify-content: center;
    flex: none;
    width: 58px;
    height: 47px;
}

.app:first-child {
    width: 57px;
}

.app:nth-child(2) {
    width: 56px;
}

.app:nth-child(3) {
    width: 57px;
    padding-right: 3px;
}

.open {
    background: linear-gradient(#76b9ed, #76b9ed) center bottom / 48px 3px no-repeat;
}

.current {
    background: linear-gradient(#76b9ed, #76b9ed) center bottom / 58px 3px no-repeat, #344b3f;
}

.stack {
    background: linear-gradient(#76b9ed, #76b9ed) 5px bottom / 38px 3px no-repeat, linear-gradient(#4b7d99, #4b7d99) 43px bottom / 10px 3px no-repeat;
}

.x {
    fill: #fff;
    font: bold 11px "Noto Sans", sans-serif;
}

.tray {
    display: flex;
    align-items: center;
    justify-content: flex-end;
    flex: 1;
    margin-right: 4px;
    padding-right: 23px;
    border-right: 1px solid #4c5e53;
    gap: 10px;
    line-height: 22px;
    text-align: center;
}

.tray > .people {
    margin-right: 15px;
}

.lang {
    width: 30px;
    margin: 2px 0 0 1px;
    font-size: 13.2px;
}

.clock {
    width: 68px;
    margin-top: 2px;
    font-size: 13.2px;
}

.notes {
    position: relative;
    margin-left: 9px;
}

.notes b {
    position: absolute;
    left: 8px;
    top: 8px;
    width: 19px;
    height: 19px;
    border: 1px solid #777;
    border-radius: 50%;
    background-color: #2b3a32;
    line-height: 17px;
    font-size: 12px;
}

#pointer {
    position: absolute;
    left: 34px;
    top: 129px;
    width: 38px;
    height: 38px;
    border-radius: 50%;
    background-color: #ff0;
    mix-blend-mode: multiply;
}

#arrow {
    position: absolute;
    left: 52px;
    top: 148px;
}
```
